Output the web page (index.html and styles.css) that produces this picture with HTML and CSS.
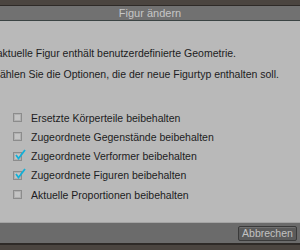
FILE: index.html
```html
<!DOCTYPE html>
<html lang="de">
<head>
  <meta charset="UTF-8">
  <title>Figur ändern</title>
  <link rel="stylesheet" href="styles.css">
</head>
<body>
  <div class="top-band"></div>

  <div class="dialog">
    <div class="title-bar">Figur ändern</div>

    <div class="content">
      <p class="message msg-first">Die aktuelle Figur enthält benutzerdefinierte Geometrie.</p>
      <p class="message msg-second">Wählen Sie die Optionen, die der neue Figurtyp enthalten soll.</p>

      <ul class="options">
        <li class="option">
          <span class="box"></span>
          <span class="label">Ersetzte Körperteile beibehalten</span>
        </li>
        <li class="option">
          <span class="box"></span>
          <span class="label">Zugeordnete Gegenstände beibehalten</span>
        </li>
        <li class="option">
          <span class="box checked">
            <svg class="tick" width="12" height="12" viewBox="0 0 12 12"><polyline points="2,6 4.5,9.5 11,1" fill="none" stroke="#12b0d8" stroke-width="1.8"/></svg>
          </span>
          <span class="label">Zugeordnete Verformer beibehalten</span>
        </li>
        <li class="option">
          <span class="box checked">
            <svg class="tick" width="12" height="12" viewBox="0 0 12 12"><polyline points="2,6 4.5,9.5 11,1" fill="none" stroke="#12b0d8" stroke-width="1.8"/></svg>
          </span>
          <span class="label">Zugeordnete Figuren beibehalten</span>
        </li>
        <li class="option">
          <span class="box"></span>
          <span class="label">Aktuelle Proportionen beibehalten</span>
        </li>
      </ul>
    </div>

    <div class="footer">
      <button class="cancel-button">Abbrechen</button>
    </div>
  </div>

  <div class="bottom-band"></div>
</body>
</html>
```

FILE: styles.css
```css
* {
  margin: 0;
  padding: 0;
  box-sizing: border-box;
}

body {
  width: 300px;
  height: 250px;
  overflow: hidden;
  background: #4b4540;
  font-family: 'Liberation Sans', Arial, sans-serif;
  font-size: 10.5px;
}

.top-band {
  height: 6px;
  background: #4b4540;
  border-bottom: 1px solid #2e2a27;
}

/* Title */
.title-bar {
  height: 15px;
  line-height: 15px;
  background: #717171;
  border-bottom: 1px solid #3b4444;
  color: #c6c6c6;
  text-align: center;
  font-size: 11px;
}

/* Body of the dialog */
.content {
  height: 201px;
  background: #b9b9b9;
  color: #1c1c22;
  padding-top: 25px;
  overflow: hidden;
}

.message {
  white-space: nowrap;
  line-height: 14px;
}

.msg-first {
  margin-left: -22px;
}

.msg-second {
  margin-top: 7px;
  margin-left: -10px;
}

.options {
  list-style: none;
  margin-top: 27px;
  padding-left: 13px;
}

.option {
  display: flex;
  align-items: center;
  height: 19.25px;
}

.box {
  position: relative;
  width: 9px;
  height: 9px;
  border: 1px solid #8c8c8c;
  background: #c4c4c4;
  box-shadow: inset 0 0 0 1px #b0b0b0;
  margin-right: 9px;
  flex-shrink: 0;
}

.tick {
  position: absolute;
  left: 0;
  top: -4px;
}

.label {
  white-space: nowrap;
}

/* Buttons */
.footer {
  height: 21px;
  background: #6b6b6b;
  border-top: 1px solid #a4a4a4;
  display: flex;
  justify-content: flex-end;
  align-items: center;
  padding-right: 3px;
}

.cancel-button {
  width: 59px;
  height: 15px;
  background: #5b5b5b;
  border: 1px solid #3a3a3a;
  border-radius: 2px;
  box-shadow: inset 0 1px 0 #707070;
  color: #c2c2c2;
  font-family: 'Liberation Sans', Arial, sans-serif;
  font-size: 10.5px;
  line-height: 13px;
}

.bottom-band {
  height: 6px;
  background: #4b4540;
  border-top: 2px solid #2e2a27;
}
```
